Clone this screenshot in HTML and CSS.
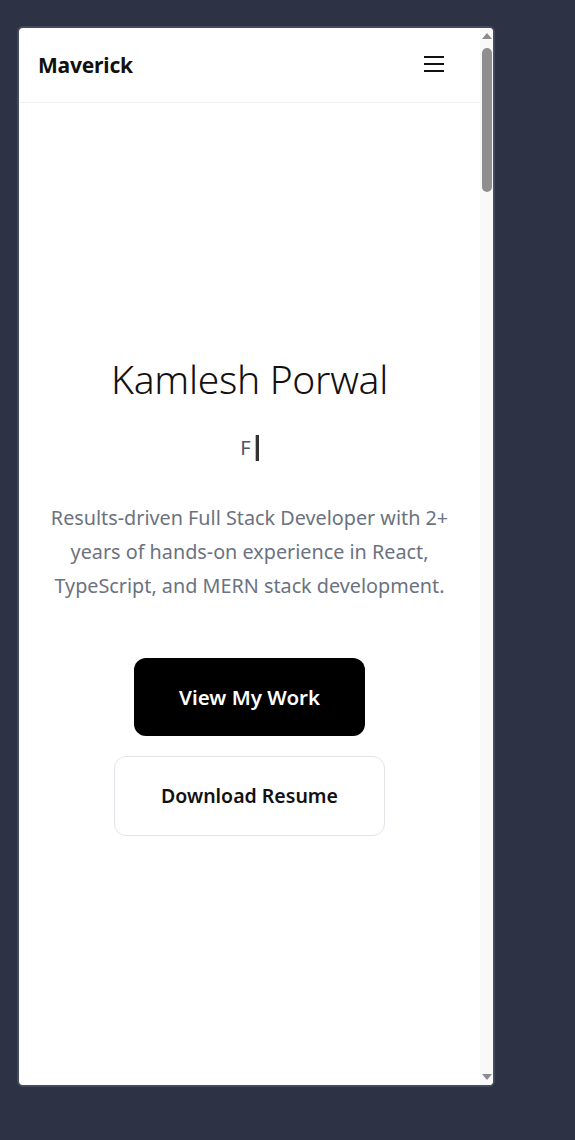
FILE: index.html
```html
<!DOCTYPE html>
<html lang="en">
<head>
<meta charset="utf-8">
<title>Maverick</title>
<link rel="stylesheet" href="styles.css">
</head>
<body>
<div class="frame">
  <div class="page">
    <header class="nav">
      <div class="brand">Maverick</div>
      <button class="menu" aria-label="Menu">
        <svg width="22" height="18" viewBox="0 0 22 18"><path d="M1 2h20M1 9h20M1 16h20" stroke="#111" stroke-width="2" fill="none"/></svg>
      </button>
    </header>
    <main class="hero">
      <h1 class="name">Kamlesh Porwal</h1>
      <div class="typing">F <span class="caret"></span></div>
      <p class="intro">Results-driven Full Stack Developer with 2+ years of hands-on experience in React, TypeScript, and MERN stack development.</p>
      <div class="actions">
        <a class="btn btn-dark" href="#work">View My Work</a>
        <a class="btn btn-light" href="#resume">Download Resume</a>
      </div>
    </main>
  </div>
  <div class="scrollbar">
    <div class="arrow up"></div>
    <div class="thumb"></div>
    <div class="spacer"></div>
    <div class="arrow down"></div>
  </div>
</div>
</body>
</html>
```
FILE: styles.css
```css
* { box-sizing: border-box; }
html, body { margin: 0; }
body {
  background: #2d3245;
  font-family: "Noto Sans", "Open Sans", sans-serif;
  padding: 26px 0 0 17px;
  height: 1140px;
}
.frame {
  width: 478px;
  height: 1061px;
  border: 2px solid #454b5e;
  border-radius: 6px;
  background: #fff;
  overflow: hidden;
  display: flex;
}
.page {
  flex: 1;
  display: flex;
  flex-direction: column;
}
.nav {
  height: 75px;
  border-bottom: 1px solid #f0f0f0;
  display: flex;
  align-items: center;
  justify-content: space-between;
  padding: 0 35px 0 19px;
}
.brand {
  font-size: 21px;
  font-weight: 700;
  color: #111;
  letter-spacing: -0.2px;
}
.menu {
  border: 0;
  background: none;
  padding: 0;
  display: flex;
  margin-top: -2px;
}
.hero {
  flex: 1;
  display: flex;
  flex-direction: column;
  align-items: center;
  justify-content: center;
  text-align: center;
  padding: 4px 20px 0;
}
.name {
  margin: 0;
  font-size: 39px;
  font-weight: 300;
  color: #111;
  line-height: 1.2;
  letter-spacing: -0.3px;
}
.typing {
  margin-top: 30px;
  font-size: 20px;
  color: #4b5563;
  display: flex;
  align-items: center;
  gap: 4px;
  height: 30px;
}
.caret {
  display: inline-block;
  height: 26px;
  background: #333;
  border-left: 1px solid #bbb;
  width: 4px;
}
.intro {
  margin: 38px 0 0;
  font-size: 19.8px;
  line-height: 34px;
  color: #6b7280;
  max-width: 410px;
}
.actions {
  margin-top: 55px;
  display: flex;
  flex-direction: column;
  align-items: center;
  gap: 20px;
}
.btn {
  display: flex;
  align-items: center;
  justify-content: center;
  text-decoration: none;
  font-size: 19.5px;
  font-weight: 600;
  border-radius: 12px;
}
.btn-dark {
  width: 231px;
  height: 78px;
  background: #000;
  color: #fff;
  font-size: 20.5px;
}
.btn-light {
  width: 271px;
  height: 80px;
  background: #fff;
  color: #111;
  border: 1px solid #e2e4e9;
}
.scrollbar {
  width: 13px;
  background: #f9f9f9;
  display: flex;
  flex-direction: column;
  align-items: center;
}
.arrow {
  width: 0;
  height: 0;
  border-left: 5px solid transparent;
  border-right: 5px solid transparent;
}
.arrow.up {
  margin-top: 5px;
  border-bottom: 6px solid #8c8c8c;
}
.arrow.down {
  margin-bottom: 5px;
  border-top: 6px solid #8c8c8c;
}
.thumb {
  margin-top: 9px;
  width: 10px;
  height: 144px;
  border-radius: 5px;
  background: #8f8f8f;
}
.spacer { flex: 1; }
```
